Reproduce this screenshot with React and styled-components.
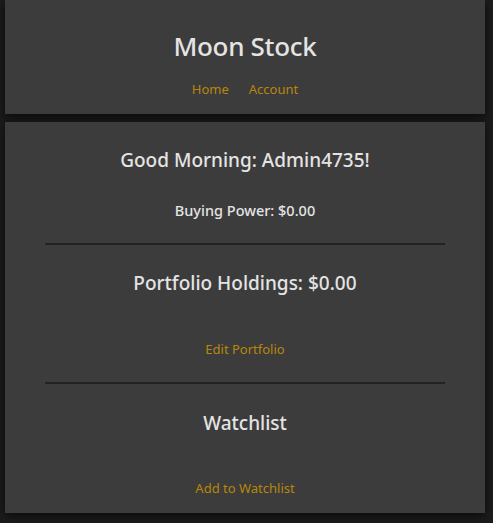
import React from "react";
import styled, { createGlobalStyle } from "styled-components";

const Global = createGlobalStyle`
  html, body {
    margin: 0;
    padding: 0;
    background: #1c1c1c;
    font-family: "Noto Sans", "Open Sans", sans-serif;
    color: #e0e0e0;
  }
`;

const Page = styled.div`
  display: flex;
  flex-direction: column;
  gap: 8px;
  padding: 0 8px 10px 5px;
`;

const Card = styled.section`
  background: #3c3c3c;
  box-shadow: 0 3px 10px rgba(0, 0, 0, 0.65);
  display: flex;
  flex-direction: column;
  align-items: center;
  text-align: center;
  padding: ${(p) => p.$pad};
`;

const Title = styled.h1`
  margin: 0;
  font-size: 26px;
  font-weight: 500;
  line-height: 36px;
  letter-spacing: -0.3px;
  color: #e4e4e4;
`;

const Nav = styled.nav`
  display: flex;
  gap: 20px;
  margin-top: 16px;
`;

const Link = styled.a`
  font-size: 13px;
  line-height: 18px;
  color: #b8860b;
  text-decoration: none;
  cursor: pointer;
  margin-top: ${(p) => p.$mt || 0}px;
`;

const Heading = styled.h2`
  margin: ${(p) => p.$mt || 0}px 0 0;
  font-size: 19px;
  font-weight: 500;
  line-height: 26px;
  color: #e4e4e4;
`;

const Sub = styled.p`
  margin: 27px 0 0;
  font-size: 14.5px;
  line-height: 20px;
  font-weight: 500;
  color: #e4e4e4;
`;

const Divider = styled.hr`
  align-self: stretch;
  margin: ${(p) => p.$mt}px 40px 0;
  border: none;
  height: 2px;
  background: #222;
`;

export default function App() {
  return (
    <>
      <Global />
      <Page>
        <Card $pad="28px 0 16px">
          <Title>Moon Stock</Title>
          <Nav>
            <Link>Home</Link>
            <Link>Account</Link>
          </Nav>
        </Card>
        <Card $pad="25px 0 16px">
          <Heading>Good Morning: Admin4735!</Heading>
          <Sub>Buying Power: $0.00</Sub>
          <Divider $mt={23} />
          <Heading $mt={25}>Portfolio Holdings: $0.00</Heading>
          <Link $mt={44}>Edit Portfolio</Link>
          <Divider $mt={24} />
          <Heading $mt={26}>Watchlist</Heading>
          <Link $mt={43}>Add to Watchlist</Link>
        </Card>
      </Page>
    </>
  );
}
